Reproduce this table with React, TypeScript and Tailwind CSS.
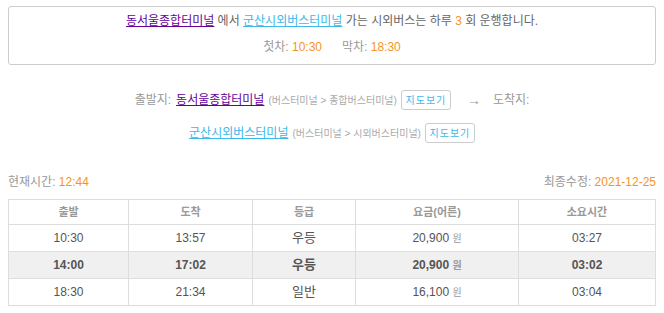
import React from "react";

const font = { fontFamily: '"Liberation Sans", "Noto Sans CJK KR", sans-serif' };

function MapButton() {
  return (
    <span className="inline-flex items-center justify-center h-[20px] w-[50px] border border-[#ccc] rounded-[3px] text-[10px] tracking-[1px] text-[#3cb8ea] bg-white">
      지도보기
    </span>
  );
}

const rows = [
  { dep: "10:30", arr: "13:57", grade: "우등", fare: "20,900", dur: "03:27", hi: false },
  { dep: "14:00", arr: "17:02", grade: "우등", fare: "20,900", dur: "03:02", hi: true },
  { dep: "18:30", arr: "21:34", grade: "일반", fare: "16,100", dur: "03:04", hi: false },
];

export default function App() {
  return (
    <div style={font} className="w-[664px] h-[313px] bg-white overflow-hidden pt-[6px]">
      <div className="mx-2 h-[59px] border border-[#ccc] rounded-[3px] flex flex-col items-center pt-[6px]">
        <div className="text-[12px] leading-[16px] text-[#666]">
          <span className="text-[#660099] underline">동서울종합터미널</span> 에서{" "}
          <span className="text-[#3cb8ea] underline">군산시외버스터미널</span> 가는 시외버스는 하루{" "}
          <span className="text-[#f7931e]">3</span> 회 운행합니다.
        </div>
        <div className="mt-[10px] text-[12px] leading-[16px] text-[#999]">
          첫차: <span className="text-[#f7931e]">10:30</span>
          <span className="inline-block w-[20px]" />
          막차: <span className="text-[#f7931e]">18:30</span>
        </div>
      </div>

      <div className="mt-[25px] flex flex-col items-center gap-[13px] text-[12px]">
        <div className="flex items-center h-[20px]">
          <span className="text-[#999]">출발지:</span>
          <span className="ml-[5px] text-[#660099] underline">동서울종합터미널</span>
          <span className="ml-[4px] text-[10px] text-[#aaa]">(버스터미널 &gt; 종합버스터미널)</span>
          <span className="ml-[4px]"><MapButton /></span>
          <span className="ml-[16px] text-[14px] text-[#999]">→</span>
          <span className="ml-[12px] text-[#999]">도착지:</span>
        </div>
        <div className="flex items-center h-[20px]">
          <span className="text-[#3cb8ea] underline">군산시외버스터미널</span>
          <span className="ml-[4px] text-[10px] text-[#aaa]">(버스터미널 &gt; 시외버스터미널)</span>
          <span className="ml-[4px]"><MapButton /></span>
        </div>
      </div>

      <div className="mx-2 mt-[31px] flex justify-between text-[12px] leading-[16px] text-[#999]">
        <span>
          현재시간: <span className="text-[#f7931e]">12:44</span>
        </span>
        <span>
          최종수정: <span className="text-[#f7931e]">2021-12-25</span>
        </span>
      </div>

      <table className="ml-2 mt-[9px] w-[647px] border-collapse table-fixed text-center">
        <colgroup>
          <col className="w-[120px]" />
          <col className="w-[124px]" />
          <col className="w-[103px]" />
          <col className="w-[163px]" />
          <col className="w-[137px]" />
        </colgroup>
        <thead>
          <tr className="h-[25px]">
            {["출발", "도착", "등급", "요금(어른)", "소요시간"].map((h) => (
              <th key={h} className="border border-[#ddd] text-[11px] font-bold text-[#999] p-0">
                {h}
              </th>
            ))}
          </tr>
        </thead>
        <tbody>
          {rows.map((r) => (
            <tr
              key={r.dep}
              className={r.hi ? "h-[27px] bg-[#f0f0f0] font-bold text-[#555]" : "h-[27px] text-[#555]"}
            >
              <td className="border border-[#ddd] text-[12px] p-0">{r.dep}</td>
              <td className="border border-[#ddd] text-[12px] p-0">{r.arr}</td>
              <td className="border border-[#ddd] text-[13px] p-0">{r.grade}</td>
              <td className="border border-[#ddd] text-[12px] p-0">
                {r.fare} <span className="text-[10px] text-[#999]">원</span>
              </td>
              <td className="border border-[#ddd] text-[12px] p-0">{r.dur}</td>
            </tr>
          ))}
        </tbody>
      </table>
    </div>
  );
}
